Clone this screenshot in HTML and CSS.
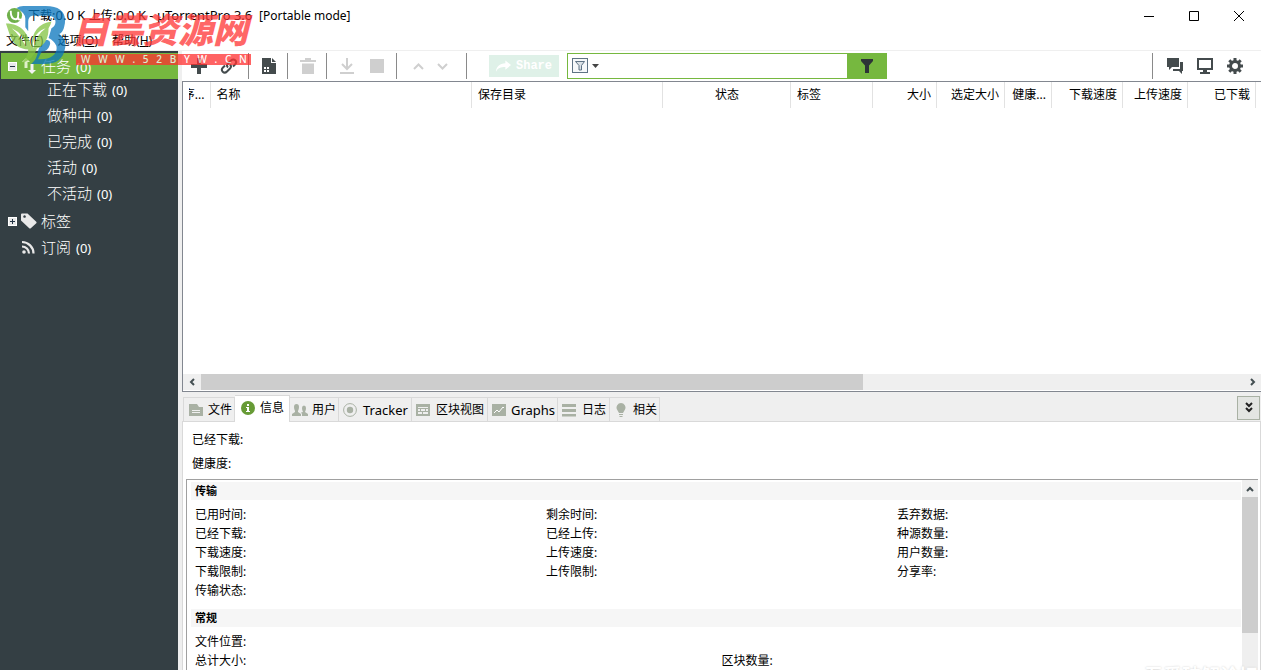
FILE: index.html
```html
<!DOCTYPE html>
<html lang="zh-CN">
<head>
<meta charset="utf-8">
<title>µTorrentPro 3.6</title>
<link rel="stylesheet" href="styles.css">
</head>
<body>
<div class="app">
  <header class="titlebar">
    <svg class="app-icon" viewBox="0 0 18 18"><circle cx="9" cy="9" r="8" fill="#6fb04a"/><path d="M5 4c0 6 1 9 5 9 3 0 3-3 3-8M13 11c0 2 1 3 3 2" fill="none" stroke="#fff" stroke-width="2"/></svg>
    <h1 class="title">下载<span class="latin">:0.0 K </span>上传<span class="latin">:0.0 K - µTorrentPro 3.6  </span>[Portable mode]</h1>
    <div class="window-buttons">
      <button aria-label="最小化"><svg viewBox="0 0 12 12"><path d="M1 6.500h10"/></svg></button>
      <button aria-label="最大化"><svg viewBox="0 0 12 12"><path d="M1.500 1.500h9v9h-9z"/></svg></button>
      <button aria-label="关闭"><svg viewBox="0 0 12 12"><path d="M1 1l10 10M11 1L1 11"/></svg></button>
    </div>
  </header>
  <nav class="menubar">
    <button>文件(<u>F</u>)</button><button>选项(<u>O</u>)</button><button>帮助(<u>H</u>)</button>
  </nav>

  <div class="body">
    <aside class="sidebar">
      <ul class="tree">
        <li class="node selected"><span class="expander minus"></span>
          <svg class="node-icon" viewBox="0 0 16 16"><path d="M5 0l4 4H6.500v6h-3V4H1z" fill="#dff0c8"/><path d="M11 16l-4-4h2.500V6h3v6H15z" fill="#f2f2f2"/></svg>
          <span class="label">任务</span><span class="count">(0)</span></li>
        <li class="leaf"><span class="label">正在下载</span><span class="count">(0)</span></li>
        <li class="leaf"><span class="label">做种中</span><span class="count">(0)</span></li>
        <li class="leaf"><span class="label">已完成</span><span class="count">(0)</span></li>
        <li class="leaf"><span class="label">活动</span><span class="count">(0)</span></li>
        <li class="leaf"><span class="label">不活动</span><span class="count">(0)</span></li>
        <li class="node root tags"><span class="expander plus"></span>
          <svg class="node-icon" viewBox="0 0 16 16"><path fill-rule="evenodd" d="M0 1.500Q0 .5 1 .5h5.500L15.500 9v1L9.500 15.500h-1L0 7.500zM3.500 2.200a1.300 1.300 0 1 0 .1 0z" fill="#e9e9e9"/></svg>
          <span class="label">标签</span></li>
        <li class="node root"><span class="expander"></span>
          <svg class="node-icon" viewBox="0 0 16 16"><circle cx="3" cy="13" r="1.800" fill="#e9e9e9"/><path d="M1 7.500a7 7 0 0 1 7 7M1 3a11.500 11.500 0 0 1 11.500 11.500" fill="none" stroke="#e9e9e9" stroke-width="2.200"/></svg>
          <span class="label">订阅</span><span class="count">(0)</span></li>
      </ul>
    </aside>

    <main class="main">
      <div class="toolbar">
        <div class="group">
          <button aria-label="添加"><svg viewBox="0 0 18 18"><path d="M7 1h4v6h6v4h-6v6H7v-6H1V7h6z"/></svg></button>
          <button aria-label="添加链接"><svg viewBox="0 0 18 18"><path class="line" d="M8 10.500c-1.500-1.500-1-3 0-4l3-3c3-3 7 1 4 4l-2 2M10 7.500c1.500 1.500 1 3 0 4l-3 3c-3 3-7-1-4-4l2-2"/></svg></button>
        </div>
        <div class="group single">
          <button aria-label="新建"><svg viewBox="0 0 18 18"><path fill-rule="evenodd" d="M2 1h9v5h5v11H2zM4 10h2v2H4zM7 10h2v2H7zM4 13h2v2H4zM7 13h2v2H7z"/><path d="M12 1l4 4h-4z"/></svg></button>
        </div>
        <div class="group single off">
          <button aria-label="删除" disabled><svg viewBox="0 0 18 18"><path d="M6 1h6v2h5v2H1V3h5zM3 6.500h12V17H3z"/></svg></button>
        </div>
        <div class="group pair off">
          <button aria-label="开始" disabled><svg viewBox="0 0 18 18"><path class="line" d="M9 1v11M4 7l5 5 5-5M2 16h14"/></svg></button>
          <button aria-label="停止" disabled><svg viewBox="0 0 18 18"><path d="M2 2h14v14H2z"/></svg></button>
        </div>
        <div class="group arrows off">
          <button aria-label="上移" disabled><svg viewBox="0 0 18 18"><path class="line" d="M4 12l4.500-4.500L13 12"/></svg></button>
          <button aria-label="下移" disabled><svg viewBox="0 0 18 18"><path class="line" d="M4 7l4.500 4.500L13 7"/></svg></button>
        </div>
        <button class="share" disabled><svg viewBox="0 0 16 14"><path d="M10 1l6 5-6 5V8C5 8 2 9 0 13c0-5 4-9 10-9z"/></svg>Share</button>
        <form class="search">
          <button type="button" class="scope" aria-label="筛选范围"><svg viewBox="0 0 28 16"><rect x=".5" y=".5" width="15" height="14" fill="#f6f8fa" stroke="#5f7385"/><path d="M3.500 3.500h9L9.500 7.500v4.500h-2.500V7.500z" fill="#dbe1e6" stroke="#5f7385"/><path d="M20 6h7l-3.500 4z" fill="#444"/></svg></button>
          <input type="text" aria-label="搜索">
          <button type="button" class="go" aria-label="筛选"><svg viewBox="0 0 12 14"><path d="M0 0h12v2L8 6.500V14H4V6.500L0 2z" fill="#2d3436"/></svg></button>
        </form>
        <div class="group tools">
          <button aria-label="聊天"><svg viewBox="0 0 18 18"><path d="M1 1h12v9H6l-3 3v-3H1z"/><path d="M14 5h3v9h-1v3l-3-3H7v-2h7z"/></svg></button>
          <button aria-label="远程"><svg viewBox="0 0 18 18"><path fill-rule="evenodd" d="M1 1h16v12h-6v2h3v2H4v-2h3v-2H1zM3 3v8h12V3z"/></svg></button>
          <button aria-label="设置"><svg viewBox="0 0 18 18"><circle cx="9" cy="9" r="4.500" fill="none" stroke="#444b4d" stroke-width="3"/><path d="M9 1v3M9 14v3M1 9h3M14 9h3M3.300 3.300l2.200 2.200M12.500 12.500l2.200 2.200M3.300 14.700l2.200-2.200M12.500 5.500l2.200-2.200" stroke="#444b4d" stroke-width="3"/></svg></button>
        </div>
      </div>

      <section class="list">
        <table>
          <colgroup><col class="w27"><col><col class="w191"><col class="w128"><col class="w82"><col class="w64"><col class="w68"><col class="w47"><col class="w71"><col class="w65"><col class="w68"></colgroup>
          <thead><tr><th class="num"><span class="clip">序...</span></th><th>名称</th><th>保存目录</th><th class="mid">状态</th><th>标签</th><th class="num">大小</th><th class="num">选定大小</th><th class="num">健康...</th><th class="num">下载速度</th><th class="num">上传速度</th><th class="num">已下载</th></tr></thead>
        </table>
        <div class="hscroll">
          <svg viewBox="0 0 16 16"><path d="M9 5L6 8l3 3"/></svg>
          <div class="track"><div class="thumb"></div></div>
          <svg viewBox="0 0 16 16"><path d="M6 5l3 3-3 3"/></svg>
        </div>
      </section>

      <section class="details">
        <div class="tabs">
          <button class="tab"><svg viewBox="0 0 14 14"><path fill-rule="evenodd" d="M0 1h8l2 3h4v9H0zM3 7v1h8V7zM3 9v1h8V9z"/></svg>文件</button>
          <button class="tab active"><svg viewBox="0 0 14 14"><circle cx="7" cy="7" r="7" fill="#679b36"/><path d="M6 3h2v2H6zM5 6h3v4h1v1H5v-1h1V7H5z" fill="#fff"/></svg>信息</button>
          <button class="tab people"><svg viewBox="0 0 16 14"><path d="M2 4a2.500 3 0 0 1 5 0q0 2-1 4v1l3 2v2H0v-2l3-2V8Q2 6 2 4zM10 5a2 2.500 0 0 1 4 0q0 2-1 4l3 2v2h-6v-2l-1-1.500 2-.5Q10 7 10 5z"/></svg>用户</button>
          <button class="tab wide latin"><svg viewBox="0 0 14 14"><circle cx="7" cy="7" r="6.400" fill="none" stroke="#a9b1a4"/><circle cx="7" cy="7" r="3.200"/></svg>Tracker</button>
          <button class="tab wide"><svg viewBox="0 0 14 14"><path fill-rule="evenodd" d="M0 1h14v12H0zM2 4v1h10V4zM2 6v2h2V6zM5 6v2h4V6zM10 6v2h2V6zM2 9v2h4V9zM7 9v2h5V9z"/></svg>区块视图</button>
          <button class="tab latin"><svg viewBox="0 0 14 14"><path d="M0 1h14v12H0z"/><path d="M2 10l3-3 2 2 4-5 1 1" fill="none" stroke="#fff"/></svg>Graphs</button>
          <button class="tab wide"><svg viewBox="0 0 14 14"><path d="M0 1h14v3H0zM0 6h14v3H0zM0 11h14v2.500H0z"/></svg>日志</button>
          <button class="tab"><svg viewBox="0 0 14 14"><path d="M7 0a4.500 4.500 0 0 1 4 6.500L9 10H5L3 6.500A4.500 4.500 0 0 1 7 0zM5 11h4v1H5zM5.500 13h3v1h-3z"/></svg>相关</button>
          <button class="collapse" aria-label="收起"><svg viewBox="0 0 10 12"><path d="M2 1l3 3 3-3M2 6l3 3 3-3"/></svg></button>
        </div>
        <div class="panel">
          <p class="summary">已经下载:</p>
          <p class="summary">健康度:</p>
          <div class="info">
            <div class="info-body">
              <h2>传输</h2>
              <div class="facts thirds">
                <span>已用时间:</span><span>剩余时间:</span><span>丢弃数据:</span>
                <span>已经下载:</span><span>已经上传:</span><span>种源数量:</span>
                <span>下载速度:</span><span>上传速度:</span><span>用户数量:</span>
                <span>下载限制:</span><span>上传限制:</span><span>分享率:</span>
                <span>传输状态:</span>
              </div>
              <h2>常规</h2>
              <div class="facts halves">
                <span>文件位置:</span><span></span>
                <span>总计大小:</span><span>区块数量:</span>
              </div>
            </div>
            <div class="vscroll"><svg viewBox="0 0 16 16"><path d="M5 10l3-3 3 3"/></svg><div class="vthumb"></div></div>
          </div>
        </div>
      </section>
    </main>
  </div>

  <div class="brand">
    <svg class="brand-logo" viewBox="0 0 64 64">
      <path fill-rule="evenodd" fill="#0875bd" d="M13 3Q16 1 20 1H43C59 1 66 9 62 23Q61 28 57 30Q65 35 63 45C61 56 54 61 42 61H28Q34 56 35 48L39 36H45Q49 37 47 42Q45 48 39 48L35 56C49 57 56 50 54 42Q52 37 46 34L49 24Q54 21 53 16Q52 11 45 11H29Q25 12 25 17V27L22 23V14Q22 8 13 3Z"/>
      <path fill="#82c341" fill-rule="evenodd" d="M2 19C18 19 25 29 28 43C29 27 36 19 49 17Q48 21 46 24Q46 40 34 45Q31 56 17 61Q25 54 25 46C8 44 7 33 2 19ZM30 45Q33 31 43 24Q34 27 31 35Q29 40 30 45ZM8 24Q16 31 23 43Q21 30 8 24Z"/>
    </svg>
    <div class="brand-text">
      <strong>白芸资源网</strong>
      <div class="brand-url"><span>W</span><span>W</span><span>W</span><span>.</span><span>5</span><span>2</span><span>B</span><span>Y</span><span>W</span><span>.</span><span>C</span><span>N</span></div>
    </div>
  </div>
  <div class="forum-mark">吾爱破解论坛</div>
</div>
</body>
</html>
```
FILE: styles.css
```css
* { box-sizing: border-box; }
body { margin: 0; background: #fff; color: #000; font: 12px/18px "Noto Sans", "Noto Sans CJK SC", sans-serif; }
button { font: inherit; color: inherit; border: 0; padding: 0; margin: 0; background: none; }
h1, h2, p, ul { margin: 0; padding: 0; }
svg { display: block; flex: none; }
.app { position: relative; height: 100vh; overflow: hidden; display: flex; flex-direction: column; }

.titlebar { display: flex; align-items: center; height: 31px; flex: none; padding-left: 6px; }
.app-icon { width: 17px; height: 17px; margin-right: 5px; }
.title { flex: 1; font-size: 12px; font-weight: 400; white-space: pre; }
.latin { font-size: 13px; }
.window-buttons { display: flex; }
.window-buttons button { width: 45px; height: 30px; display: grid; place-items: center; }
.window-buttons svg { width: 12px; height: 12px; fill: none; stroke: #000; }
.menubar { display: flex; gap: 14px; height: 19px; flex: none; padding-left: 6px; }

.body { flex: 1; min-height: 0; display: flex; background: #efefef; }
.sidebar { width: 178px; flex: none; background: #343f44; color: #fff; padding: 2px 0 2px 1px; border-top: 1px solid #efefef; }
.tree { list-style: none; }
.tree li { display: flex; align-items: center; height: 26px; }
.tree .selected { background: #76b83f; }
.tree .leaf { padding: 0 0 6px 46px; }
.node { padding-left: 7px; }
.tree .root { padding-bottom: 4px; }
.tags { margin-top: 1px; }
.expander { width: 9px; height: 9px; margin-right: 4px; }
.minus, .plus { border: 1px solid #fff; background: linear-gradient(#234, #234) center / 5px 1px no-repeat #e8e8e8; }
.plus { background: linear-gradient(#234, #234) center / 5px 1px no-repeat, linear-gradient(#234, #234) center / 1px 5px no-repeat, #e8e8e8; }
.node-icon { width: 16px; height: 16px; margin-right: 4px; }
.label { font-size: 15px; font-weight: 300; }
.count { margin-left: 5px; font-size: 13px; padding-top: 2px; }

.main { flex: 1; min-width: 0; display: flex; flex-direction: column; padding-left: 4px; }
.toolbar { display: flex; align-items: center; height: 31px; flex: none; background: #fff; border: solid #efefef; border-width: 1px 0 0; padding-bottom: 1px; }
.group { display: flex; align-items: center; height: 26px; padding: 0 4px 0 2px; border-right: 1px solid #8a8a8a; }
.group button { width: 30px; display: grid; place-items: center; }
.group svg { width: 18px; height: 18px; fill: #444b4d; }
.group .line { fill: none; stroke: #444b4d; stroke-width: 2; }
.group.off svg { fill: #cfcfcf; }
.group.off .line { fill: none; stroke: #cfcfcf; }
.single { padding: 0 3px 0 5px; }
.pair { padding: 0 4px 0 5px; }
.arrows { padding: 0 11px 0 10px; }
.arrows button { width: 24px; }
.share { display: flex; align-items: center; gap: 5px; height: 22px; padding: 0 7px; margin: 0 8px 0 22px; background: #dff1e8; color: #fff; font: bold 12px "Liberation Mono", monospace; }
.share svg { width: 15px; height: 14px; fill: #fff; }
.search { display: flex; width: 320px; height: 26px; border: 1px solid #76b83f; }
.scope { padding: 0 4px; }
.scope svg { width: 28px; height: 16px; }
.search input { flex: 1; min-width: 0; border: 0; outline: 0; padding: 0; background: #fff; font: inherit; }
.go { width: 39px; background: #76b83f; display: grid; place-items: center; }
.go svg { width: 12px; height: 14px; }
.tools { margin-left: auto; border-right: 0; border-left: 1px solid #8a8a8a; padding: 0 11px 0 7px; }

.list { flex: 1; min-height: 0; display: flex; flex-direction: column; justify-content: space-between; background: #fff; border: solid #828790; border-width: 1px 0 1px 1px; }
table { table-layout: fixed; width: calc(100% - 5px); border-collapse: collapse; }
th { height: 26px; padding: 0 5px 0 6px; font-weight: 400; text-align: left; border-right: 1px solid #e2e2e2; white-space: nowrap; overflow: hidden; }
th.num { text-align: right; }
th.mid { text-align: center; }
.clip { display: flex; justify-content: flex-end; overflow: hidden; }
.w27 { width: 27px; } .w191 { width: 191px; } .w128 { width: 128px; } .w82 { width: 82px; } .w64 { width: 64px; }
.w68 { width: 68px; } .w47 { width: 47px; } .w71 { width: 71px; } .w65 { width: 65px; }
.hscroll { display: flex; align-items: center; height: 17px; background: #efefef; border-bottom: 1px solid #fff; padding-left: 2px; }
.hscroll svg, .vscroll svg { width: 16px; height: 16px; fill: none; stroke: #444f52; stroke-width: 2; }
.track { flex: 1; height: 16px; }
.thumb { width: 63.4%; height: 16px; background: #cdcdcd; }

.details { height: 278px; flex: none; display: flex; flex-direction: column; padding-top: 3px; }
.tabs { display: flex; align-items: flex-end; height: 27px; flex: none; padding: 0 1px 0 1px; border-bottom: 1px solid #d9d9d9; }
.tab { display: flex; align-items: center; gap: 5px; height: 24px; padding: 0 2px 0 4px; border: solid #d9d9d9; border-width: 1px 1px 0 0; white-space: nowrap; }
.tab:first-child { border-left-width: 1px; padding-left: 5px; }
.tab svg { width: 14px; height: 14px; fill: #a9b1a4; }
.tab.active { height: 27px; margin-bottom: -1px; background: #fff; padding: 0 5px 3px 6px; }
.tab.people { padding-left: 2px; }
.tab.people svg { width: 16px; }
.tab.people { gap: 4px; }
.tab.wide { gap: 6px; padding-right: 3px; }
.collapse { margin-left: auto; align-self: center; width: 23px; height: 24px; border: 1px solid #a9b1a4; background: #e3e5e2; display: grid; place-items: center; }
.collapse svg { width: 10px; height: 12px; fill: none; stroke: #222; stroke-width: 2; }
.panel { flex: 1; min-height: 0; display: flex; flex-direction: column; background: #fff; border: solid #d9d9d9; border-width: 0 1px; padding: 6px 2px 0 3px; }
.summary { height: 24px; padding: 3px 6px; }
.info { flex: 1; min-height: 0; display: flex; margin-top: 3px; border: solid #a0a0a0; border-width: 1px 0 0 1px; overflow: hidden; }
.info-body { flex: 1; padding: 2px 1px 0 4px; }
h2 { height: 18px; padding-left: 4px; background: #f6f6f6; font-size: 11px; line-height: 18px; font-weight: 700; }
.facts { display: grid; grid-auto-rows: 19px; line-height: 19px; padding: 5px 0 9px 4px; margin-right: -7px; }
.thirds { grid-template-columns: repeat(3, 1fr); }
.halves { grid-template-columns: repeat(2, 1fr); }
.vscroll { width: 16px; background: #efefef; padding-top: 1px; position: relative; }
.vthumb { height: 72%; background: #cdcdcd; }

.brand { position: absolute; left: 3px; top: 5px; display: flex; opacity: .75; pointer-events: none; }
.brand-logo { width: 64px; height: 62px; }
.brand-text { width: 184px; margin: 6px 0 0 6px; }
.brand-text strong { display: block; height: 43px; font: italic 900 35px/34px "Noto Sans CJK SC", sans-serif; color: #ff3535; white-space: nowrap; }
.brand-url { display: flex; justify-content: space-between; width: 175px; height: 11px; margin-left: 3px; padding: 0 4px 0 5px; background: #ff3030; color: #fff; font-size: 10px; line-height: 11px; font-weight: 500; }
.forum-mark { position: absolute; right: 3px; top: 663px; font: 700 19px/24px "Noto Sans CJK SC", sans-serif; color: #fff; text-shadow: 0 0 2px #ccc; }
```
